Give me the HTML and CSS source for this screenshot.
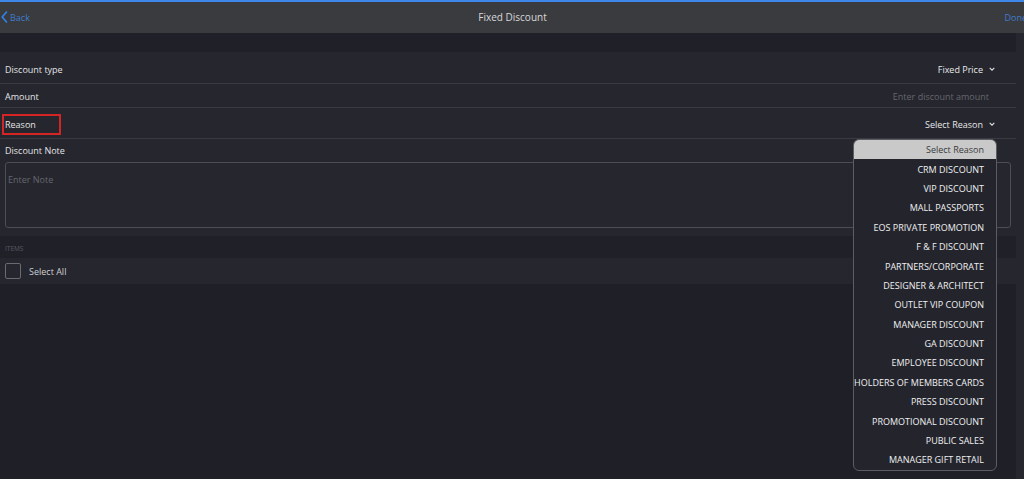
FILE: index.html
```html
<!DOCTYPE html>
<html lang="en">
<head>
    <meta charset="UTF-8">
    <meta name="viewport" content="width=device-width, initial-scale=1.0">
    <title>Fixed Discount</title>
    <link rel="stylesheet" href="styles.css">
</head>
<body>
    <div class="topline"></div>
    <header class="navbar">
        <a class="nav-back" href="#">
            <svg width="7" height="12" viewBox="0 0 7 12"><path d="M5.5 1 L1.2 6 L5.5 11" fill="none" stroke="#2f84ee" stroke-width="1.6" stroke-linecap="round" stroke-linejoin="round"/></svg>
            <span>Back</span>
        </a>
        <h1 class="nav-title">Fixed Discount</h1>
        <a class="nav-done" href="#">Done</a>
    </header>

    <div class="page">
        <main class="content">
            <div class="band"></div>

            <section class="form">
                <div class="row row-first">
                    <span class="label">Discount type</span>
                    <span class="picker">Fixed Price
                        <svg width="6" height="4" viewBox="0 0 6 4"><path d="M0.7 0.8 L3 3.1 L5.3 0.8" fill="none" stroke="#e0e0e0" stroke-width="1.1"/></svg>
                    </span>
                </div>
                <div class="row">
                    <span class="label">Amount</span>
                    <span class="placeholder amount">Enter discount amount</span>
                </div>
                <div class="row row-tall">
                    <span class="label label-error">Reason</span>
                    <span class="picker">Select Reason
                        <svg width="6" height="4" viewBox="0 0 6 4"><path d="M0.7 0.8 L3 3.1 L5.3 0.8" fill="none" stroke="#e0e0e0" stroke-width="1.1"/></svg>
                    </span>
                </div>
                <div class="note">
                    <span class="label">Discount Note</span>
                    <div class="note-box"><span class="placeholder">Enter Note</span></div>
                </div>
            </section>

            <div class="band band-items"><span>ITEMS</span></div>

            <div class="select-all">
                <span class="checkbox"></span>
                <span>Select All</span>
            </div>
        </main>
        <div class="scroll-track"></div>
    </div>

    <!-- reason picker, open -->
    <ul class="dropdown">
        <li class="dropdown-head">Select Reason</li>
        <li>CRM DISCOUNT</li>
        <li>VIP DISCOUNT</li>
        <li>MALL PASSPORTS</li>
        <li>EOS PRIVATE PROMOTION</li>
        <li>F &amp; F DISCOUNT</li>
        <li>PARTNERS/CORPORATE</li>
        <li>DESIGNER &amp; ARCHITECT</li>
        <li>OUTLET VIP COUPON</li>
        <li>MANAGER DISCOUNT</li>
        <li>GA DISCOUNT</li>
        <li>EMPLOYEE DISCOUNT</li>
        <li>HOLDERS OF MEMBERS CARDS</li>
        <li>PRESS DISCOUNT</li>
        <li>PROMOTIONAL DISCOUNT</li>
        <li>PUBLIC SALES</li>
        <li>MANAGER GIFT RETAIL</li>
    </ul>
</body>
</html>
```

FILE: styles.css
```css
* {
  margin: 0;
  padding: 0;
  box-sizing: border-box;
}

body {
  font-family: "Open Sans", "Noto Sans", sans-serif;
  font-size: 9px;
  color: #e4e4e6;
  background-color: #1f1f27;
  height: 479px;
  overflow: hidden;
  position: relative;
}

/* Top navigation */
.topline {
  height: 2px;
  background-color: #3d87ea;
}

.navbar {
  height: 31px;
  background-color: #3a3b3f;
  display: grid;
  grid-template-columns: 1fr auto 1fr;
  align-items: center;
  padding: 0 0 1px 1px;
}

.nav-back {
  display: flex;
  align-items: center;
  gap: 2px;
  color: #3f7ccc;
  text-decoration: none;
}

.nav-title {
  font-size: 10px;
  font-weight: normal;
  color: #d8d8da;
}

.nav-done {
  justify-self: end;
  color: #3f7ccc;
  text-decoration: none;
  margin-right: -3px;
}

/* Page body */
.page {
  display: flex;
}

.content {
  width: 1016px;
}

.scroll-track {
  width: 8px;
  height: 446px;
  background-color: #26262e;
}

.band {
  height: 19px;
  background-color: #202029;
}

.form {
  background-color: #25262e;
  padding-bottom: 8px;
}

.row {
  height: 24px;
  display: flex;
  align-items: center;
  justify-content: space-between;
  padding: 1px 21px 0 5px;
  border-bottom: 1px solid #393a42;
}

.row-first {
  height: 32px;
  padding-top: 3px;
}

.row-tall {
  height: 31px;
  padding-top: 2px;
}

.label-error {
  display: flex;
  align-items: center;
  width: 59px;
  height: 21px;
  margin-left: -3px;
  padding-left: 1px;
  border: 2px solid #d42424;
}

.picker {
  display: flex;
  align-items: center;
  gap: 6px;
  color: #e8e8ea;
}

.placeholder {
  color: #66666d;
}

.amount {
  margin-right: 6px;
}

.note {
  padding: 5px 5px 0;
}

.note-box {
  margin-top: 5px;
  height: 66px;
  border: 1px solid #4d4d54;
  border-radius: 3px;
  padding: 10px 2px;
}

.band-items {
  height: 22px;
  display: flex;
  align-items: flex-end;
  padding: 0 5px 5px;
}

.band-items span {
  font-size: 6.5px;
  color: #5a5a62;
}

.select-all {
  height: 26px;
  background-color: #25262e;
  display: flex;
  align-items: center;
  gap: 8px;
  padding-left: 5px;
  color: #cfcfd2;
}

.checkbox {
  width: 16px;
  height: 16px;
  border: 1px solid #6a6a71;
  border-radius: 2px;
}

/* Open reason list */
.dropdown {
  position: absolute;
  left: 853px;
  top: 139px;
  width: 144px;
  list-style: none;
  background-color: #24252c;
  border: 1px solid #5c5c63;
  border-radius: 6px;
  overflow: hidden;
}

.dropdown li {
  height: 19.4px;
  display: flex;
  align-items: center;
  justify-content: flex-end;
  padding-right: 12px;
  color: #f0f0f2;
  white-space: nowrap;
}

.dropdown .dropdown-head {
  background-color: #c9c9c9;
  color: #3a3a3e;
}
```
